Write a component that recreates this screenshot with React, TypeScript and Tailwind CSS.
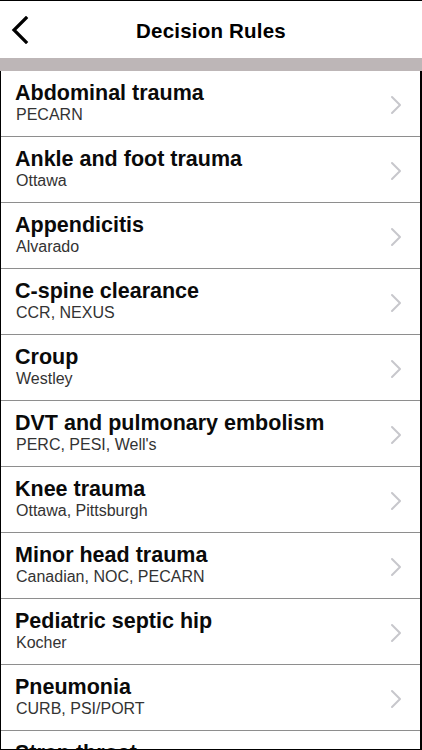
import React from "react";

type Rule = { title: string; sub: string };

const rules: Rule[] = [
  { title: "Abdominal trauma", sub: "PECARN" },
  { title: "Ankle and foot trauma", sub: "Ottawa" },
  { title: "Appendicitis", sub: "Alvarado" },
  { title: "C-spine clearance", sub: "CCR, NEXUS" },
  { title: "Croup", sub: "Westley" },
  { title: "DVT and pulmonary embolism", sub: "PERC, PESI, Well's" },
  { title: "Knee trauma", sub: "Ottawa, Pittsburgh" },
  { title: "Minor head trauma", sub: "Canadian, NOC, PECARN" },
  { title: "Pediatric septic hip", sub: "Kocher" },
  { title: "Pneumonia", sub: "CURB, PSI/PORT" },
  { title: "Strep throat", sub: "Centor" },
];

function BackChevron() {
  return (
    <svg width="18" height="28" viewBox="0 0 18 28" fill="none">
      <path d="M15 2 L3 14 L15 26" stroke="#000" strokeWidth="3.2" strokeLinecap="square" strokeLinejoin="miter" />
    </svg>
  );
}

function RowChevron() {
  return (
    <svg width="12" height="20" viewBox="0 0 12 20" fill="none">
      <path d="M2 2 L10 10 L2 18" stroke="#c7c7cc" strokeWidth="2" strokeLinecap="round" strokeLinejoin="round" />
    </svg>
  );
}

export default function App() {
  return (
    <div
      className="w-[422px] h-[750px] overflow-hidden bg-white border-t border-b border-black flex flex-col"
      style={{ fontFamily: '"Liberation Sans", Arial, Helvetica, sans-serif' }}
    >
      <header className="relative h-[57px] shrink-0 flex items-center justify-center">
        <button className="absolute left-[11px] top-[15px]">
          <BackChevron />
        </button>
        <h1 className="text-[20.5px] font-bold text-black tracking-[0.2px] pt-[3px]">Decision Rules</h1>
      </header>
      <div className="h-[13px] shrink-0 bg-[#bdb6b7]" />
      <ul className="flex-1 border-l border-r-2 border-black overflow-hidden">
        {rules.map((r) => (
          <li
            key={r.title}
            className="h-[66px] border-b border-[#8e8e8e] flex items-start justify-between pl-[14px] pr-[18px]"
          >
            <div className="pt-[10px]">
              <div className="text-[21.5px] leading-[24px] font-bold text-[#0a0a0a]">{r.title}</div>
              <div className="text-[16px] leading-[20px] text-[#333] pl-[1px]">{r.sub}</div>
            </div>
            <div className="self-center pt-[2px]">
              <RowChevron />
            </div>
          </li>
        ))}
      </ul>
    </div>
  );
}
